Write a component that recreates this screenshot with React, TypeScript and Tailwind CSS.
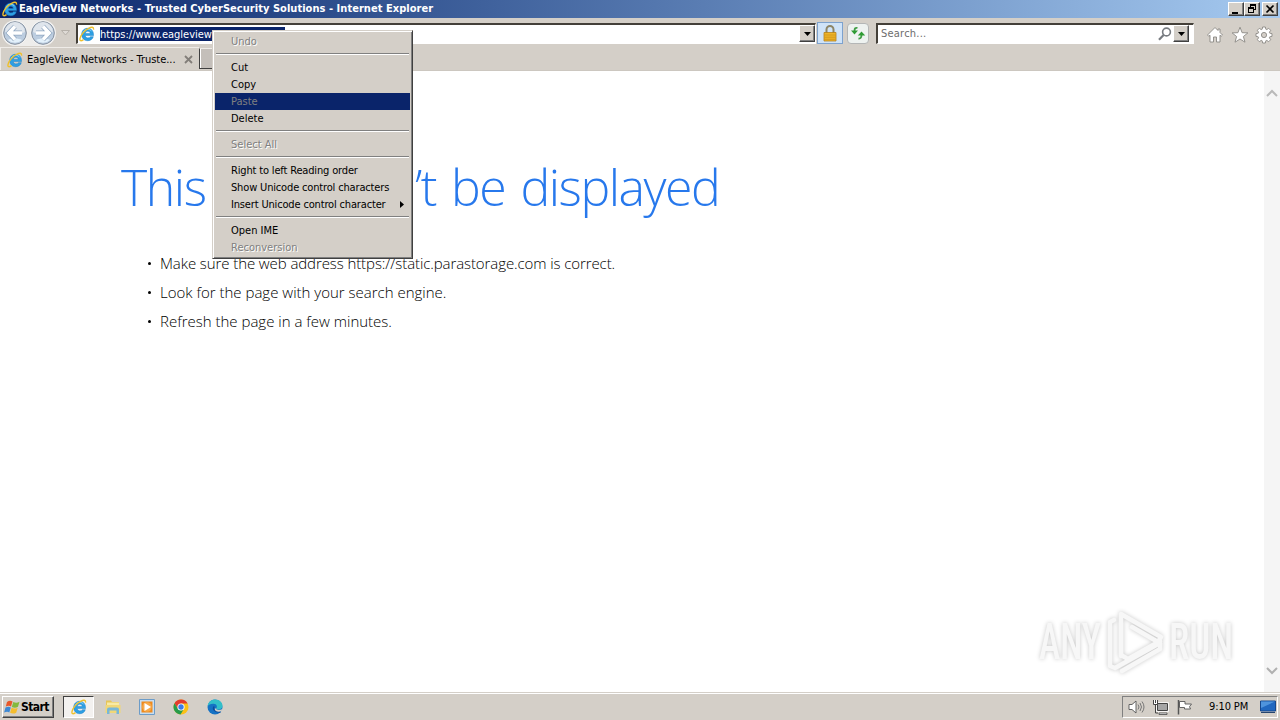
import React from "react";
import clsx from "clsx";

type MenuEntry = {
  label: string;
  disabled?: boolean;
  active?: boolean;
  submenu?: boolean;
};

const menuGroups: MenuEntry[][] = [
  [{ label: "Undo", disabled: true }],
  [
    { label: "Cut" },
    { label: "Copy" },
    { label: "Paste", disabled: true, active: true },
    { label: "Delete" },
  ],
  [{ label: "Select All", disabled: true }],
  [
    { label: "Right to left Reading order" },
    { label: "Show Unicode control characters" },
    { label: "Insert Unicode control character", submenu: true },
  ],
  [{ label: "Open IME" }, { label: "Reconversion", disabled: true }],
];

const tips = [
  "Make sure the web address https://static.parastorage.com is correct.",
  "Look for the page with your search engine.",
  "Refresh the page in a few minutes.",
];

const IeIcon = () => (
  <svg width="16" height="16" viewBox="0 0 16 16" className="shrink-0">
    <path
      d="M8.600 2.300c3.500 0 5.900 2.500 5.900 6.300v1H6.300c.2 1.500 1.200 2.300 2.700 2.300 1.100 0 1.900-.4 2.400-1.200h2.900c-.8 2.500-2.800 4-5.600 4-3.600 0-6-2.500-6-6.200s2.400-6.200 5.900-6.200zM6.400 7.400h4.900c-.2-1.400-1.100-2.200-2.500-2.200-1.300 0-2.200.8-2.400 2.200z"
      fill="#2d9fe3"
      stroke="#1b7fc6"
      strokeWidth=".5"
    />
    <path d="M4 6.500c.7-2 2.400-3.200 4.600-3.200 1.800 0 3.200.7 4.100 2" fill="none" stroke="#86d3f7" />
    <path
      d="M4.500 13.600C2 15.400.6 15 1 12.600 1.700 9 5.500 4.400 9.600 2.300c3-1.600 5.300-1.600 4.900 1.400"
      fill="none"
      stroke="#efc02c"
      strokeWidth="1.400"
    />
  </svg>
);

const NavArrow = ({ flip }: { flip?: boolean }) => (
  <svg
    width="26"
    height="26"
    viewBox="0 0 26 26"
    className={clsx("shrink-0", flip && "-scale-x-100")}
  >
    <circle cx="13" cy="13" r="12.500" fill="#f4f4f4" />
    <circle cx="13" cy="13" r="11.300" fill="#bccde0" stroke="#848f9d" />
    <path d="M3 12a10 10 0 0 1 20 0c-6 3-14 3-20 0z" fill="#dfe5ec" />
    <path d="M6 20a10 10 0 0 0 14 0c-4-2-10-2-14 0z" fill="#e3f1fb" />
    <path
      d="M13 6.500 6.800 13l6.200 6.500M7.500 13H20"
      fill="none"
      stroke="#8ea6c0"
      strokeWidth="4.800"
    />
    <path d="M13 6.500 6.800 13l6.200 6.500M7.500 13H20" fill="none" stroke="#fff" strokeWidth="3.400" />
  </svg>
);

const raised =
  "border border-t-white border-l-white border-r-[#404040] border-b-[#404040] bg-[#d4cfc8]";

const sunken =
  "border-t-2 border-l-2 border-r border-b border-t-[#444039] border-l-[#444039] border-r-white border-b-white bg-white";

const DropButton = () => (
  <div
    className={clsx(
      raised,
      "flex h-[17px] w-4 shrink-0 items-center justify-center shadow-[inset_-1px_-1px_#808080]"
    )}
  >
    <svg width="7" height="4" viewBox="0 0 7 4">
      <path d="M0 0h7L3.500 4z" fill="#000" />
    </svg>
  </div>
);

const TitleBar = () => (
  <header className="flex h-[18px] items-center bg-linear-to-r from-[#0a246a] to-[#a6caf0] pr-[2px] pl-[2px] text-white">
    <IeIcon />
    <h1 className="ml-px pt-px text-[11px] font-bold tracking-[0.04px] whitespace-nowrap">
      EagleView Networks - Trusted CyberSecurity Solutions - Internet Explorer
    </h1>
    <div className="ml-auto flex">
      <button className={clsx(raised, "h-[14px] w-4 shadow-[inset_-1px_-1px_#808080]")}>
        <svg width="14" height="12" viewBox="0 0 14 12">
          <path d="M3 9h6v2H3z" fill="#000" />
        </svg>
      </button>
      <button className={clsx(raised, "h-[14px] w-4 shadow-[inset_-1px_-1px_#808080]")}>
        <svg width="14" height="12" viewBox="0 0 14 12" shapeRendering="crispEdges">
          <path
            d="M5 1h6v6H9V6h1V3H6v1H5zM3 4h6v6H3zM4 6v3h4V6z"
            fill="#000"
            fillRule="evenodd"
          />
        </svg>
      </button>
      <button className={clsx(raised, "ml-[2px] h-[14px] w-4 shadow-[inset_-1px_-1px_#808080]")}>
        <svg width="14" height="12" viewBox="0 0 14 12">
          <path d="m3.500 2.500 7 7m0-7-7 7" stroke="#000" strokeWidth="1.700" />
        </svg>
      </button>
    </div>
  </header>
);

const AddressRow = () => (
  <div className="flex h-[28px] items-center pl-[2px]">
    <div className="flex rounded-full bg-[#eeedeb]">
      <NavArrow />
      <div className="ml-[2px] flex">
        <NavArrow flip />
      </div>
    </div>
    <svg width="9" height="6" viewBox="0 0 9 6" className="ml-[5px]">
      <path d="M.5.5h8l-4 4.500z" fill="#dedad5" stroke="#b5b0a9" />
    </svg>

    {/* address box */}
    <div className={clsx(sunken, "ml-[6px] flex h-[21px] w-[740px] items-center pl-px")}>
      <IeIcon />
      <span className="ml-[5px] h-[14px] w-[185px] overflow-hidden bg-[#0a246a] text-[11px] leading-[15px] whitespace-nowrap text-white">
        https://www.eagleviewnetworks.com/
      </span>
      <div className="ml-auto flex">
        <DropButton />
      </div>
    </div>

    <div className="ml-px flex h-[22px] w-[26px] items-center justify-center border border-[#7da2ce] bg-[#cfe3f8]">
      <svg width="14" height="17" viewBox="0 0 14 17">
        <path d="M3.500 8V4.500a3.500 3.500 0 0 1 7 0V8" fill="none" stroke="#8d8567" strokeWidth="2" />
        <path d="M1 7.500h12V16H1z" fill="#efb52a" stroke="#b5801a" strokeWidth=".8" />
        <path d="M1.500 10h11M1.500 12.200h11M1.500 14.300h11" stroke="#c98d17" strokeWidth=".7" />
      </svg>
    </div>
    <div className="ml-[4px] flex h-[21px] w-[22px] items-center justify-center rounded-sm border border-[#b4b6b6] bg-[#eef2f0]">
      <svg width="16" height="14" viewBox="0 0 16 14">
        <path d="M7.500 2q-3-1-3 3" fill="none" stroke="#3f9d44" strokeWidth="1.800" />
        <path d="M1 4.500h7L4.500 8.500z" fill="#2e9b33" />
        <path d="M8.500 12.500q3 .5 3-4" fill="none" stroke="#3f9d44" strokeWidth="1.800" />
        <path d="M7.800 9.500h7.400l-3.700-4z" fill="#2e9b33" />
      </svg>
    </div>

    {/* search box */}
    <div className={clsx(sunken, "ml-[7px] flex h-[21px] w-[318px] items-center pl-[3px]")}>
      <span className="pt-[2px] text-[11px] tracking-[0.22px] text-[#6d6d6d]">Search...</span>
      <svg width="14" height="14" viewBox="0 0 14 14" className="ml-auto">
        <circle cx="8.500" cy="5" r="3.900" fill="none" stroke="#777b80" strokeWidth="1.600" />
        <path d="M5.600 8 1 12.800" stroke="#777b80" strokeWidth="2.200" />
      </svg>
      <div className="mr-[4px] ml-[1px]">
        <DropButton />
      </div>
    </div>

    {/* home, favourites, tools */}
    <div className="ml-[12px] flex gap-[6.5px] pt-[4px]">
      <svg width="18" height="18" viewBox="0 0 18 18">
        <path
          d="M9 1.500 1.500 9l1.300 1.300 1.200-1.100V16h3.500v-5h3v5H14V9.200l1.200 1.100L16.500 9 14 6.500V3h-2v1.500z"
          fill="#fff"
          stroke="#8b8985"
          strokeWidth=".9"
        />
      </svg>
      <svg width="18" height="18" viewBox="0 0 18 18">
        <path
          d="m9 1.200 2.100 5.500 5.800.2-4.500 3.600 1.600 5.700L9 13l-5 3.200 1.600-5.700L1.100 6.900l5.800-.2z"
          fill="#fff"
          stroke="#8b8985"
          strokeWidth=".9"
        />
      </svg>
      <svg width="18" height="18" viewBox="0 0 18 18">
        <path
          d="M7.600 1h2.800l.4 2.200 1 .4 1.900-1.300 2 2-1.300 1.900.4 1 2.200.4v2.800l-2.200.4-.4 1 1.300 1.900-2 2-1.900-1.300-1 .4-.4 2.200H7.600l-.4-2.200-1-.4-1.900 1.300-2-2 1.300-1.900-.4-1L1 10.400V7.600l2.200-.4.4-1-1.300-1.900 2-2 1.900 1.300 1-.4z"
          fill="#fff"
          stroke="#8b8985"
          strokeWidth=".9"
        />
        <circle cx="9" cy="9" r="2.600" fill="#d4cfc8" stroke="#8b8985" strokeWidth=".9" />
      </svg>
    </div>
  </div>
);

const TabRow = () => (
  <div className="flex h-[24px] items-end border-b border-[#ccc7c0]">
    <div className="flex h-[23px] w-[199px] items-center border-t border-l border-[#efece8] pt-px pl-[6px]">
      <IeIcon />
      <span className="ml-[4px] pt-[2px] text-[11px] tracking-[-0.04px] whitespace-nowrap">
        EagleView Networks - Truste...
      </span>
      <svg width="9" height="9" viewBox="0 0 9 9" className="mr-[6px] ml-auto">
        <path d="m1 1 7 7m0-7L1 8" stroke="#827e79" strokeWidth="1.800" />
      </svg>
    </div>
    <div className="mb-px h-[21px] w-[30px] border-t border-b border-l border-t-[#efece8] border-b-[#404040] border-l-[#404040] bg-[#c4bfba] shadow-[inset_1px_0_#fff]" />
  </div>
);

const ContextMenu = () => (
  <nav className="absolute top-[30px] left-[212px] h-[229px] w-[201px] border border-t-[#d4cfc8] border-r-[#404040] border-b-[#404040] border-l-[#d4cfc8] bg-[#d4cfc8] shadow-[inset_1px_1px_#fff,inset_-1px_-1px_#808080]">
    <div className="px-[2px] pt-[2px]">
      {menuGroups.map((group, i) => (
        <ul key={i}>
          {i > 0 && (
            <li className="h-[9px] px-px pt-[3px]">
              <div className="h-[2px] w-full border-t border-b border-t-[#808080] border-b-white" />
            </li>
          )}
          {group.map((item) => (
            <li
              key={item.label}
              className={clsx(
                "flex h-[17px] items-center pr-[6px] pl-4 text-[11px] leading-[17px] whitespace-nowrap",
                item.active && "bg-[#0a246a]",
                item.disabled ? "text-[#808080]" : "text-black",
                item.disabled && !item.active && "[text-shadow:1px_1px_#fff]",
                item.label.length > 20 && "tracking-[-0.16px]"
              )}
            >
              {item.label}
              {item.submenu && (
                <svg width="4" height="7" viewBox="0 0 4 7" className="ml-auto">
                  <path d="M0 0v7l4-3.500z" fill="#000" />
                </svg>
              )}
            </li>
          ))}
        </ul>
      ))}
    </div>
  </nav>
);

const Watermark = () => (
  <svg
    width="210"
    height="76"
    viewBox="0 0 210 76"
    className="absolute right-[40px] bottom-[11px] drop-shadow-[0_0_2px_rgba(0,0,0,0.22)]"
  >
    <g
      fill="#f7f7f7"
      fontFamily="Roboto, 'Liberation Sans', sans-serif"
      fontSize="50"
      fontWeight="500"
    >
      <text x="9" y="54" textLength="62" lengthAdjust="spacingAndGlyphs">
        ANY
      </text>
      <text x="139" y="54" textLength="64" lengthAdjust="spacingAndGlyphs">
        RUN
      </text>
    </g>
    <g fill="none" stroke="#f7f7f7" strokeWidth="4.500" strokeLinejoin="round" strokeLinecap="round">
      <path d="M91 51V9l40 23-3 5-26-15" />
      <path d="M91 18v32l7 4 32-18" />
      <path d="M84 15l-4 2v44l5 2 45-25" />
      <path d="M92 66l38-22v-5" />
    </g>
  </svg>
);

const Page = () => (
  <main className="relative flex h-[621px] bg-white">
    <div className="flex-1 pt-[82px] pl-[121px] font-['Open_Sans',sans-serif] font-light [font-stretch:normal]">
      <h2 className="h-[70px] text-[50px] leading-[69px] tracking-[-1.45px] whitespace-nowrap text-[#2778ec] [word-spacing:3.5px]">
        This page can’t be displayed
      </h2>
      <ul className="mt-[26px] pl-[26px] text-[15px] leading-[29px] text-black">
        {tips.map((tip, i) => (
          <li
            key={tip}
            className={clsx("flex items-center whitespace-nowrap", i === 0 && "tracking-[-0.09px]")}
          >
            <span className="mr-[9px] ml-px size-[3px] rounded-full bg-black" />
            {tip}
          </li>
        ))}
      </ul>
    </div>
    <div className="flex w-4 flex-col items-center justify-between bg-[#f5f5f5] pt-[18px] pb-[17px]">
      <svg width="12" height="8" viewBox="0 0 12 8">
        <path d="m1 7 5-5 5 5" fill="none" stroke="#b9b9b9" strokeWidth="2" />
      </svg>
      <svg width="12" height="8" viewBox="0 0 12 8">
        <path d="m1 1 5 5 5-5" fill="none" stroke="#b0b0b0" strokeWidth="2" />
      </svg>
    </div>
    <Watermark />
  </main>
);

const Taskbar = () => (
  <footer className="flex h-[28px] items-center border-t border-[#d4cfc8] bg-[#d4cfc8] pt-px shadow-[inset_0_1px_#fff]">
    <button
      className={clsx(
        raised,
        "ml-[2px] flex h-[22px] w-[52px] items-center pl-px whitespace-nowrap shadow-[inset_-1px_-1px_#808080]"
      )}
    >
      <svg width="17" height="16" viewBox="0 0 17 16" className="shrink-0">
        <path d="M3 3c2-1.500 4-1.500 5.500-.4L7 7.500C5.500 6.500 4 6.600 1.800 7.600z" fill="#e8582a" />
        <path d="M9.300 3c2 1 4 1 6.200-.2L14 7.700c-2 1.200-4 1.200-6.200.2z" fill="#84b93c" />
        <path d="M1.500 8.500c2-1 3.700-1.100 5.300-.1l-1.500 5c-1.600-1-3.200-.8-5.200.1z" fill="#3d88d4" />
        <path d="M7.600 8.800c2 1 4 1 6.100-.1l-1.500 5c-2 1.100-4 1.200-6.100.1z" fill="#f5bd2e" />
      </svg>
      <span className="text-[12px] font-bold tracking-[-0.55px]">Start</span>
    </button>
    <div className="ml-[9px] flex h-[22px] w-[31px] items-center justify-center border border-t-[#404040] border-l-[#404040] border-r-white border-b-white bg-[#f3f1ef]">
      <IeIcon />
    </div>
    <svg width="18" height="18" viewBox="0 0 18 18" className="ml-[10px]">
      <path d="M2 2.500h5l1 1.500h7v5H2z" fill="#e6c558" />
      <path d="M3 4.500h12V10H3z" fill="#f8eaa4" />
      <path d="M1.500 7h15v8h-15z" fill="#f1d777" />
      <path d="M3 16v-4.500Q3 9.500 5 9.500h8q2 0 2 2V16h-2.500v-3.500h-7V16z" fill="#78b7d8" />
    </svg>
    <svg width="18" height="18" viewBox="0 0 18 18" className="ml-[16px]">
      <path d="M1.500 1.500h15v15h-15z" fill="#c8ddf0" stroke="#6c9cc8" />
      <path d="M3.500 3.500h11v11h-11z" fill="#ef8a1d" />
      <circle cx="9" cy="9" r="4.800" fill="#f6a94a" />
      <path d="m6.500 5 6.500 4-6.500 4z" fill="#fff" />
    </svg>
    <svg width="16" height="16" viewBox="0 0 16 16" className="ml-[17px]">
      <circle cx="8" cy="8" r="7.500" fill="#fbc116" />
      <path d="M1.500 4.200A7.500 7.500 0 0 1 14.600 4.500H8L4.900 9.800z" fill="#e33b2e" />
      <path d="M1.500 4.200A7.500 7.500 0 0 0 7.500 15.500l3.500-5.700L8 11.500 4.900 9.800z" fill="#269b4b" />
      <circle cx="8" cy="8" r="3.600" fill="#fff" />
      <circle cx="8" cy="8" r="2.700" fill="#3c7ce8" />
    </svg>
    <svg width="16" height="16" viewBox="0 0 16 16" className="ml-[18px]">
      <circle cx="8" cy="8" r="7.500" fill="#1572c4" />
      <path
        d="M.6 7.500C1 2.800 4.500.5 8 .5c4.500 0 7.500 3 7.500 6.300 0 2.500-2 3.700-4 3.700-1.700 0-2.600-.6-2-1.500.9-1.400.3-4-2.800-4.200C3.700 4.600 1.500 5.700.6 7.500z"
        fill="#32bfc9"
      />
      <path d="M7 7.500c-1.500 3 1 6 6.500 5.500" fill="none" stroke="#0c4c9c" strokeWidth="1.500" />
      <path d="M9.300 9.300c-.9 1.700 3 2.400 6.200.7l-.8 2.100c-3 1.500-7 .6-7-2.300z" fill="#d4cfc8" />
    </svg>

    {/* tray */}
    <div className="mr-[2px] ml-auto flex h-[22px] w-[156px] items-center border border-t-[#808080] border-r-white border-b-white border-l-[#808080] pl-[5px]">
      <svg width="18" height="16" viewBox="0 0 18 16">
        <path d="M1 5.500h3L8 2v12l-4-3.500H1z" fill="#fff" stroke="#555" strokeWidth=".9" />
        <path d="M10 5.500q2 2.500 0 5M12 4q3 4 0 8M14 2.500q4 5.500 0 11" fill="none" stroke="#777" />
      </svg>
      <svg width="17" height="16" viewBox="0 0 17 16" className="ml-[6px]">
        <path d="M5.500 4.500h10v7h-10z" fill="#a5a5a5" stroke="#fff" strokeWidth="2.600" />
        <path d="M5.500 4.500h10v7h-10z" fill="#a5a5a5" stroke="#444" />
        <path d="M7 14h8v1.500H7z" fill="#fff" stroke="#444" strokeWidth=".8" />
        <path d="M1.500 1h4v4.500h-4z" fill="#fff" />
        <path d="M1.500 1v4.500h4V1M3.500 1v3M3.500 5.500V14H6" fill="none" stroke="#444" />
      </svg>
      <svg width="17" height="16" viewBox="0 0 17 16" className="ml-[7px]">
        <path d="M2.500 1v14.500" stroke="#555" strokeWidth="1.500" />
        <path
          d="M3.500 2.500H9V5h6.500l-2 2.700 1 2.300H8.500V8.500h-5z"
          fill="#fff"
          stroke="#555"
          strokeWidth=".9"
        />
      </svg>
      <span className="ml-[16px] pt-px text-[11px] tracking-[-0.1px] whitespace-nowrap">9:10 PM</span>
      <svg width="16" height="14" viewBox="0 0 16 14" className="mr-[1px] ml-auto">
        <path d="M.5 1h15v10H.5z" fill="#2168c0" stroke="#17488d" />
        <path d="M1 1.500h14L1 8z" fill="#4f94dd" />
        <path d="M1 12.500h14" stroke="#25456f" />
      </svg>
    </div>
  </footer>
);

const App = () => {
  return (
    <div className="relative h-[720px] w-[1280px] overflow-hidden bg-[#d4cfc8] font-['DejaVu_Sans_Condensed','DejaVu_Sans',sans-serif] text-black [font-stretch:condensed]">
      <TitleBar />
      <div className="pt-px">
        <AddressRow />
        <TabRow />
      </div>
      <Page />
      <Taskbar />
      <ContextMenu />
    </div>
  );
};

export default App;
